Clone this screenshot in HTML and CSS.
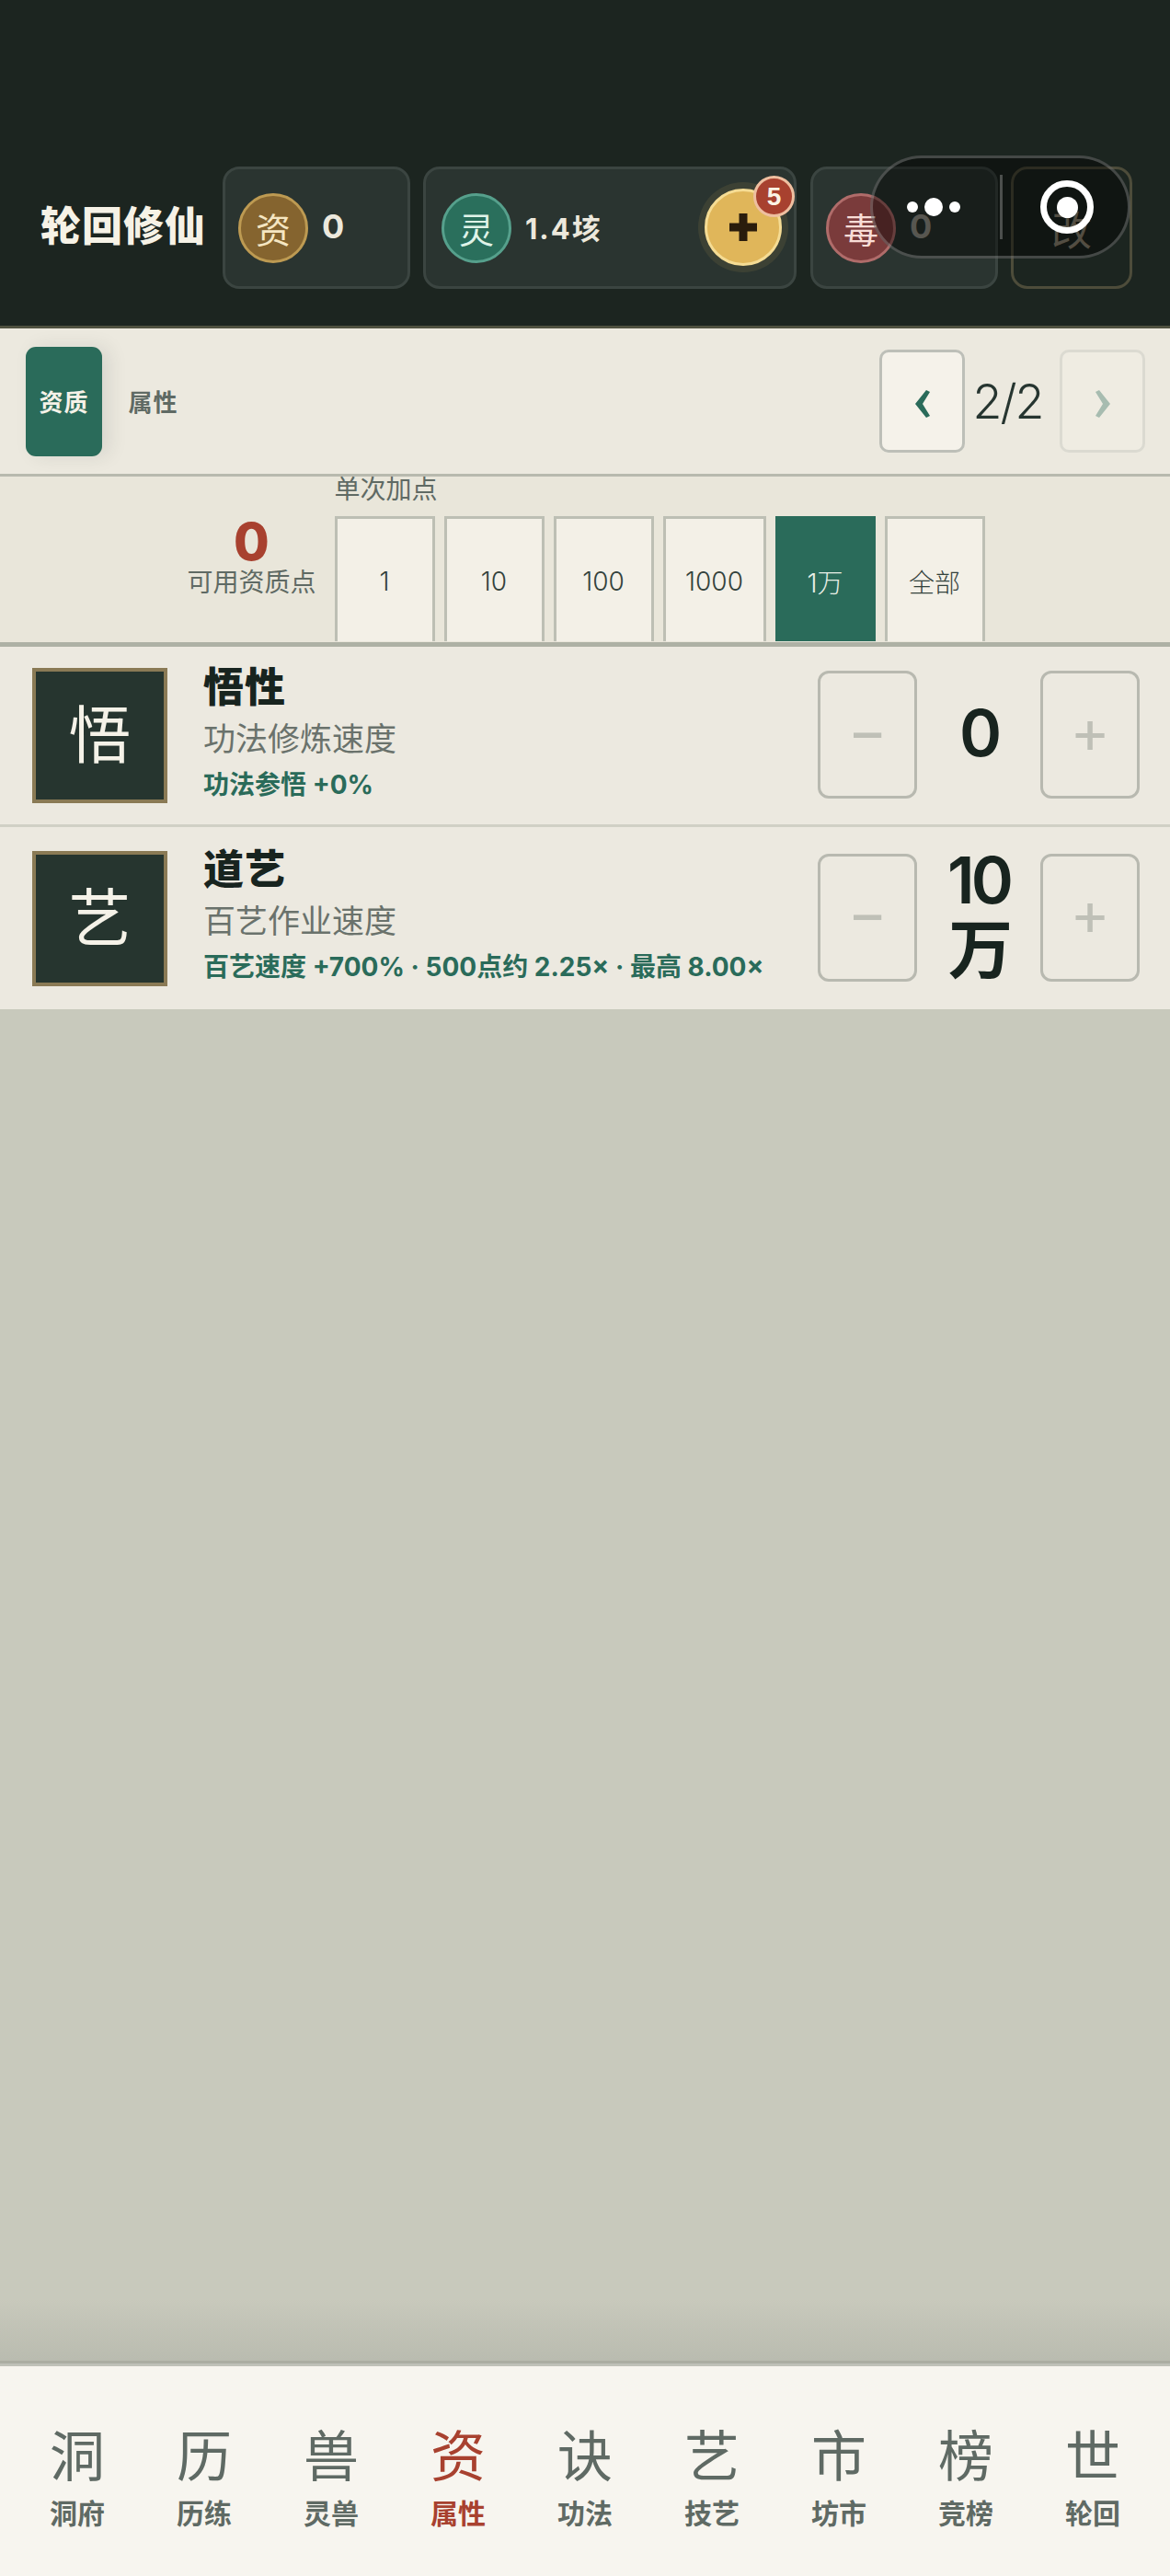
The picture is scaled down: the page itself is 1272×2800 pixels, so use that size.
FILE: index.html
```html
<!DOCTYPE html>
<html lang="zh-CN">
<head>
  <meta charset="UTF-8">
  <meta name="viewport" content="width=device-width, initial-scale=1.0">
  <title>轮回修仙</title>
  <link rel="stylesheet" href="styles.css">
</head>
<body>
  <div class="app">
    <header class="topbar">
      <h1 class="game-title">轮回修仙</h1>
      <div class="chip chip-zi">
        <span class="coin coin-zi">资</span>
        <span class="chip-value">0</span>
      </div>
      <div class="chip chip-ling">
        <span class="coin coin-ling">灵</span>
        <span class="chip-value">1.4垓</span>
        <button class="add-btn">
          <svg class="add-icon" viewBox="0 0 30 30"><path d="M10.5 0h9v10.5H30v9H19.5V30h-9V19.5H0v-9h10.5z"/></svg>
          <span class="add-badge">5</span>
        </button>
      </div>
      <div class="chip chip-du">
        <span class="coin coin-du">毒</span>
        <span class="chip-value">0</span>
      </div>
      <div class="chip chip-gai"><span>改</span></div>

      <!-- 小程序胶囊 -->
      <div class="capsule">
        <div class="capsule-dots"><i></i><i class="big"></i><i></i></div>
        <div class="capsule-line"></div>
        <div class="capsule-target"><i></i></div>
      </div>
    </header>

    <nav class="subtabs">
      <a class="subtab active">资质</a>
      <a class="subtab">属性</a>
      <div class="pager">
        <button class="page-btn">
          <svg viewBox="0 0 16 30"><path d="M12 0 L16 2 L8 15 L16 28 L12 30 L0 15z"/></svg>
        </button>
        <span class="page-num">2/2</span>
        <button class="page-btn disabled">
          <svg viewBox="0 0 16 30"><path d="M4 0 L0 2 L8 15 L0 28 L4 30 L16 15z"/></svg>
        </button>
      </div>
    </nav>

    <section class="points-bar">
      <div class="points-left">
        <div class="points-num">0</div>
        <div class="points-label">可用资质点</div>
      </div>
      <div class="step-box">
        <div class="step-title">单次加点</div>
        <div class="step-list">
          <button class="step-btn">1</button>
          <button class="step-btn">10</button>
          <button class="step-btn">100</button>
          <button class="step-btn">1000</button>
          <button class="step-btn active">1万</button>
          <button class="step-btn">全部</button>
        </div>
      </div>
    </section>

    <main class="attr-area">
      <div class="attr-row">
        <div class="attr-icon">悟</div>
        <div class="attr-info">
          <div class="attr-name">悟性</div>
          <div class="attr-desc">功法修炼速度</div>
          <div class="attr-effect">功法参悟 +0%</div>
        </div>
        <div class="stepper">
          <button class="stepper-btn">−</button>
          <div class="stepper-value">0</div>
          <button class="stepper-btn">+</button>
        </div>
      </div>
      <div class="attr-row">
        <div class="attr-icon">艺</div>
        <div class="attr-info">
          <div class="attr-name">道艺</div>
          <div class="attr-desc">百艺作业速度</div>
          <div class="attr-effect">百艺速度 +700% · 500点约 2.25× · 最高 8.00×</div>
        </div>
        <div class="stepper">
          <button class="stepper-btn">−</button>
          <div class="stepper-value">10万</div>
          <button class="stepper-btn">+</button>
        </div>
      </div>
    </main>

    <footer class="tabbar">
      <a class="tab"><span class="tab-char">洞</span><span class="tab-label">洞府</span></a>
      <a class="tab"><span class="tab-char">历</span><span class="tab-label">历练</span></a>
      <a class="tab"><span class="tab-char">兽</span><span class="tab-label">灵兽</span></a>
      <a class="tab active"><span class="tab-char">资</span><span class="tab-label">属性</span></a>
      <a class="tab"><span class="tab-char">诀</span><span class="tab-label">功法</span></a>
      <a class="tab"><span class="tab-char">艺</span><span class="tab-label">技艺</span></a>
      <a class="tab"><span class="tab-char">市</span><span class="tab-label">坊市</span></a>
      <a class="tab"><span class="tab-char">榜</span><span class="tab-label">竞榜</span></a>
      <a class="tab"><span class="tab-char">世</span><span class="tab-label">轮回</span></a>
    </footer>
  </div>
</body>
</html>
```

FILE: styles.css
```css
* {
  box-sizing: border-box;
}

body {
  margin: 0;
  padding: 0;
  background: #c8c9bc;
  font-family: "Inter", "Noto Sans CJK SC", sans-serif;
}

button {
  font-family: inherit;
  padding: 0;
}

.app {
  display: flex;
  flex-direction: column;
  width: 1272px;
  height: 2800px;
  overflow: hidden;
}

/* 顶部资源栏 */
.topbar {
  position: relative;
  display: flex;
  align-items: center;
  gap: 14px;
  height: 357px;
  padding: 181px 41px 40px 44px;
  background: #1c2520;
  border-bottom: 3px solid #4f5140;
}

.game-title {
  margin: -9px 7px 0 0;
  width: 177px;
  font-size: 44px;
  font-weight: 900;
  letter-spacing: 1px;
  color: #f6f2e6;
  white-space: nowrap;
}

.chip {
  display: flex;
  align-items: center;
  height: 133px;
  padding: 0 14px;
  background: #2a3430;
  border: 3px solid #3b4541;
  border-radius: 18px;
}

.chip-zi {
  width: 204px;
}

.chip-ling {
  position: relative;
  width: 406px;
  padding: 0 17px;
}

.chip-du {
  width: 204px;
  margin-left: 1px;
}

.chip-gai {
  justify-content: center;
  width: 132px;
  padding: 0;
  background: transparent;
  border-color: #4d4c3a;
  color: #8d8672;
  font-size: 44px;
}

.coin {
  flex: none;
  display: flex;
  align-items: center;
  justify-content: center;
  width: 76px;
  height: 76px;
  border-radius: 50%;
  border: 3px solid;
  font-size: 38px;
}

.coin-zi {
  background: #85642f;
  border-color: #bd9a52;
  color: #f5e6c2;
}

.coin-ling {
  background: #2a6f5c;
  border-color: #56a08c;
  color: #dff3e8;
}

.coin-du {
  background: #7a3b3b;
  border-color: #b06c6a;
  color: #f8ddd6;
}

.chip-value {
  margin: -3px 0 0 15px;
  font-size: 36px;
  font-weight: 700;
  color: #ece8dc;
}

.chip-ling .chip-value {
  font-size: 31px;
  letter-spacing: 2px;
}

.chip-du .chip-value {
  color: #97948a;
}

.add-btn {
  position: absolute;
  left: 303px;
  top: 21px;
  width: 84px;
  height: 84px;
  display: flex;
  align-items: center;
  justify-content: center;
  background: #e0b65a;
  border: 3px solid #f5dc94;
  border-radius: 50%;
  box-shadow: 0 0 0 7px rgba(224, 182, 90, 0.1);
}

.add-icon {
  width: 30px;
  height: 30px;
  fill: #2a1c0c;
}

.add-badge {
  position: absolute;
  top: -17px;
  right: -17px;
  width: 45px;
  height: 45px;
  display: flex;
  align-items: center;
  justify-content: center;
  background: #a8412f;
  border: 3px solid #eebfa0;
  border-radius: 50%;
  color: #fbf3e4;
  font-family: "Liberation Sans", sans-serif;
  font-size: 28px;
  font-weight: 700;
}

/* 胶囊按钮 */
.capsule {
  position: absolute;
  left: 946px;
  top: 169px;
  display: flex;
  align-items: center;
  width: 283px;
  height: 112px;
  background: rgba(0, 0, 0, 0.42);
  border: 3px solid rgba(255, 255, 255, 0.22);
  border-radius: 56px;
}

.capsule-dots {
  display: flex;
  align-items: center;
  gap: 7px;
  margin-left: 37px;
}

.capsule-dots i {
  display: block;
  width: 12px;
  height: 12px;
  background: #fff;
  border-radius: 50%;
}

.capsule-dots i.big {
  width: 20px;
  height: 20px;
}

.capsule-line {
  width: 3px;
  height: 70px;
  margin-left: 43px;
  background: rgba(255, 255, 255, 0.25);
}

.capsule-target {
  display: flex;
  align-items: center;
  justify-content: center;
  width: 58px;
  height: 58px;
  margin-left: 41px;
  border: 7px solid #fff;
  border-radius: 50%;
}

.capsule-target i {
  display: block;
  width: 23px;
  height: 23px;
  background: #fff;
  border-radius: 50%;
}

/* 子页签 */
.subtabs {
  display: flex;
  align-items: center;
  height: 161px;
  padding: 20px 27px 19px 28px;
  background: #ece9df;
  border-bottom: 3px solid #b8b9ae;
}

.subtab {
  display: flex;
  align-items: center;
  justify-content: center;
  width: 83px;
  height: 119px;
  padding-bottom: 2px;
  font-size: 26px;
  font-weight: 700;
  letter-spacing: 1px;
  color: #5f6a64;
}

.subtab.active {
  background: #2a6b5a;
  color: #f5f2e8;
  border-radius: 11px;
  box-shadow: 8px 0 20px rgba(38, 53, 48, 0.1);
}

.subtab + .subtab {
  margin-left: 14px;
}

.pager {
  display: flex;
  align-items: center;
  margin-left: auto;
  margin-top: -1px;
}

.page-btn {
  display: flex;
  align-items: center;
  justify-content: center;
  width: 93px;
  height: 112px;
  background: #f5f2ea;
  border: 3px solid #bdbfb8;
  border-radius: 10px;
}

.page-btn svg {
  width: 16px;
  height: 30px;
  margin-top: 6px;
  fill: #2a6b5a;
}

.page-btn.disabled {
  opacity: 0.35;
}

.page-num {
  width: 103px;
  padding-right: 10px;
  text-align: center;
  font-size: 52px;
  font-weight: 300;
  letter-spacing: -2px;
  color: #263530;
}

/* 可用点数 */
.points-bar {
  display: flex;
  justify-content: center;
  gap: 20px;
  height: 185px;
  padding-left: 2px;
  background: #e9e6da;
  border-bottom: 5px solid #aeb1a5;
}

.points-left {
  margin-top: 43px;
  text-align: center;
}

.points-num {
  font-size: 56px;
  line-height: 56px;
  font-weight: 800;
  color: #a8412f;
}

.points-label {
  font-size: 28px;
  line-height: 32px;
  color: #5f6a64;
}

.step-title {
  font-size: 28px;
  line-height: 28px;
  color: #5f6a64;
}

.step-list {
  display: flex;
  gap: 10px;
  margin-top: 15px;
}

/* 按钮下缘压在分隔线上 */
.step-btn {
  flex: none;
  width: 109px;
  height: 136px;
  padding-top: 2px;
  background: #f3f0e7;
  border: 3px solid #bdbfb4;
  border-bottom: none;
  font-size: 28px;
  font-weight: 300;
  color: #33423c;
}

.step-btn:nth-child(4) {
  width: 112px;
}

.step-btn.active {
  background: #2a6b5a;
  border-color: #2a6b5a;
  color: #e9efe6;
}

/* 属性行 */
.attr-area {
  flex: 1;
  background: linear-gradient(to bottom, #c8c9bc 0, #c8c9bc calc(100% - 70px), #b9bbaf 100%);
}

.attr-row {
  display: flex;
  align-items: center;
  padding: 23px 33px 23px 35px;
  background: #ece9e0;
  border-bottom: 3px solid #d0d0c5;
}

.attr-row:last-child {
  border-bottom: none;
}

.attr-icon {
  flex: none;
  display: flex;
  align-items: center;
  justify-content: center;
  width: 147px;
  height: 147px;
  padding-bottom: 10px;
  background: #26352f;
  border: 4px solid #8a7a55;
  font-size: 68px;
  color: #f5f2e8;
}

.attr-info {
  flex: 1;
  margin-left: 39px;
  margin-top: -7px;
}

.attr-name {
  font-size: 44px;
  line-height: 50px;
  font-weight: 900;
  letter-spacing: 1px;
  color: #18241f;
}

.attr-desc {
  margin-top: 8px;
  font-size: 35px;
  line-height: 46px;
  color: #6a726c;
}

.attr-effect {
  margin-top: 9px;
  font-size: 28px;
  line-height: 36px;
  font-weight: 700;
  color: #2a6b5a;
  white-space: nowrap;
}

.stepper {
  display: flex;
  align-items: center;
}

.stepper-btn {
  width: 108px;
  height: 139px;
  margin: -1px 0 1px;
  padding-bottom: 10px;
  background: transparent;
  border: 3px solid #b8b9b0;
  border-radius: 12px;
  font-size: 66px;
  font-weight: 400;
  color: #bfc0b7;
}

.stepper-value {
  width: 72px;
  margin: -3px 31px 3px;
  text-align: center;
  font-size: 70px;
  line-height: 76px;
  font-weight: 600;
  letter-spacing: -4px;
  color: #18241f;
}

/* 底部导航 */
.tabbar {
  display: flex;
  height: 231px;
  padding: 0 15px;
  background: #f7f5ef;
  border-top: 3px solid #bfc1b8;
  box-shadow: 0 -3px 0 #abada2;
}

.tab {
  flex: 1;
  display: flex;
  flex-direction: column;
  align-items: center;
  color: #5f6a64;
}

.tab-char {
  margin-top: 58px;
  font-size: 60px;
  line-height: 80px;
}

.tab-label {
  margin-top: 1px;
  font-size: 30px;
  line-height: 42px;
  font-weight: 700;
}

.tab.active {
  color: #a8412f;
}
```
